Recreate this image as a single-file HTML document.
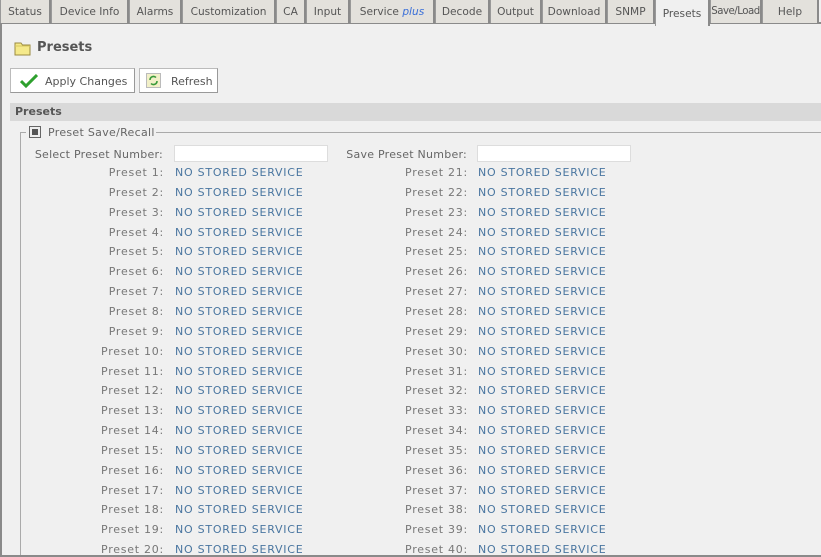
<!DOCTYPE html>
<html style="overflow:hidden;height:557px"><head><meta charset="utf-8"><style>
*{margin:0;padding:0;box-sizing:border-box}
body{width:821px;height:557px;background:#f0f0f0;font-family:"DejaVu Sans","Liberation Sans",sans-serif;font-size:10px;color:#555;position:relative;overflow:hidden}
.a{position:absolute;white-space:nowrap}
.tabs{position:absolute;left:0;top:0;width:821px;height:24px;border-bottom:2px solid #8a8a8a;background:#f0f0f0}
.tab{position:absolute;top:0;height:23px;background:#e3e1dc;border-left:1px solid #999;border-right:2px solid #8a8a8a;text-align:center;line-height:24px;font-size:10.6px;color:#555;white-space:nowrap;overflow:hidden}
.tab.act{background:#f0f0f0;height:26px;line-height:28px;z-index:2}
.frame{position:absolute;left:0;top:23px;width:3px;height:534px;border-left:2px solid #8a8a8a}
.bot{position:absolute;left:0;top:555px;width:821px;border-top:2px solid #8a8a8a;z-index:3}
.btn{position:absolute;top:68px;height:25px;background:#fff;border:1px solid #bbb;border-right-color:#999;border-bottom-color:#999;font-size:11px;color:#555;line-height:25px}
.lbl{position:absolute;text-align:right;color:#777;font-size:11px;letter-spacing:0.75px;width:200px}
.val{position:absolute;color:#4a76a0;font-size:11px;letter-spacing:0.75px}
.inp{position:absolute;top:145px;width:154px;height:17px;background:#fff;border:1px solid #ddd}
</style></head><body>
<div class="tabs"></div>
<div class="tab" style="left:0;width:51px">Status</div>
<div class="tab" style="left:51px;width:78px">Device Info</div>
<div class="tab" style="left:129px;width:53px">Alarms</div>
<div class="tab" style="left:182px;width:94px">Customization</div>
<div class="tab" style="left:276px;width:30px">CA</div>
<div class="tab" style="left:306px;width:44px">Input</div>
<div class="tab" style="left:350px;width:85px">Service <i style="color:#3a6fd8">plus</i></div>
<div class="tab" style="left:435px;width:55px">Decode</div>
<div class="tab" style="left:490px;width:52px">Output</div>
<div class="tab" style="left:542px;width:65px">Download</div>
<div class="tab" style="left:607px;width:48px">SNMP</div>
<div class="tab act" style="left:655px;width:55px">Presets</div>
<div class="tab" style="left:710px;width:52px;letter-spacing:-0.5px;font-size:10.2px">Save/Load</div>
<div class="tab" style="left:762px;width:57px">Help</div>
<div class="frame"></div>
<div class="bot"></div>

<svg class="a" style="left:14px;top:40px" width="18" height="16" viewBox="0 0 18 16"><path d="M1 3h6l1.5 2H16v10H1z" fill="#f5e98a" stroke="#9a8a40"/><path d="M1 6h15" stroke="#d8c860"/></svg>
<div class="a" style="left:37px;top:40px;font-size:13px;font-weight:bold;color:#555">Presets</div>

<div class="btn" style="left:10px;width:125px"><svg class="a" style="left:9px;top:5px" width="18" height="14" viewBox="0 0 18 14"><path d="M1 7l5 5L17 1" fill="none" stroke="#2ea02e" stroke-width="3"/></svg><span class="a" style="left:34px">Apply Changes</span></div>
<div class="btn" style="left:139px;width:79px"><svg class="a" style="left:6px;top:4px" width="15" height="15" viewBox="0 0 15 15"><rect x=".5" y=".5" width="14" height="14" fill="#f2f0c8" stroke="#bbb"/><path d="M4 7a3.5 3.5 0 0 1 6-2.5M11 8a3.5 3.5 0 0 1-6 2.5" fill="none" stroke="#3a9a3a" stroke-width="1.6"/></svg><span class="a" style="left:31px">Refresh</span></div>

<div class="a" style="left:10px;top:103px;width:811px;height:18px;background:#d9d9d9"></div>
<div class="a" style="left:15px;top:105px;font-weight:bold;font-size:11px;color:#555">Presets</div>

<div class="a" style="left:20px;top:132px;width:801px;height:423px;border-top:1px solid #aaa;border-left:1px solid #aaa"></div>
<div class="a" style="left:26px;top:125px;height:14px;width:130px;background:#f0f0f0"></div>
<svg class="a" style="left:29px;top:126px" width="12" height="12" viewBox="0 0 12 12"><rect x=".5" y=".5" width="11" height="11" fill="#eee" stroke="#666"/><rect x="3" y="3" width="6" height="6" fill="#555"/></svg>
<div class="a" style="left:48px;top:126px;font-size:11px;color:#666;letter-spacing:0.3px">Preset Save/Recall</div>

<div class="lbl" style="left:-37px;top:148px;color:#666;letter-spacing:0.25px">Select Preset Number:</div>
<div class="inp" style="left:174px"></div>
<div class="lbl" style="left:267px;top:148px;color:#666;letter-spacing:0.25px">Save Preset Number:</div>
<div class="inp" style="left:477px"></div>

<div id="rows"></div>
<script>
var h='';
for(var i=0;i<20;i++){var y=Math.round(166+i*19.85);
h+='<div class="lbl" style="left:-36px;top:'+y+'px">Preset '+(i+1)+':</div><div class="val" style="left:175px;top:'+y+'px">NO STORED SERVICE</div>';
h+='<div class="lbl" style="left:268px;top:'+y+'px">Preset '+(i+21)+':</div><div class="val" style="left:478px;top:'+y+'px">NO STORED SERVICE</div>';}
document.getElementById('rows').innerHTML=h;
</script>
</body></html>
